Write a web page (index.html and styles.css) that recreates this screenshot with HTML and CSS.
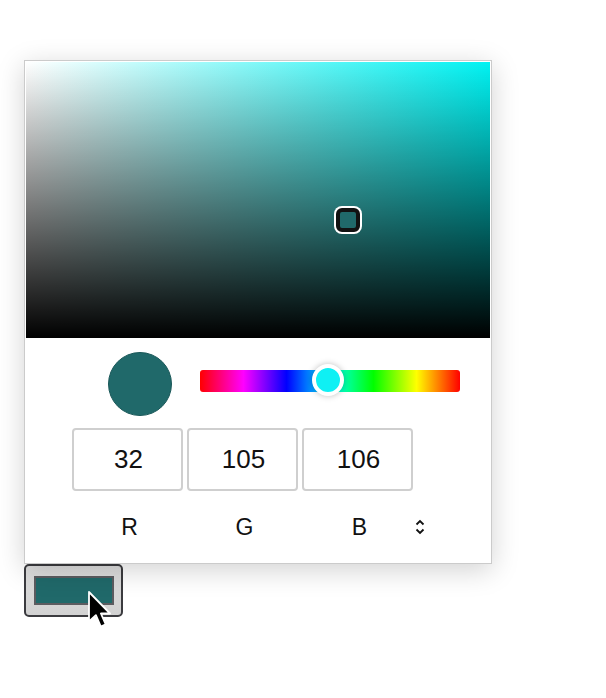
FILE: index.html
```html
<!DOCTYPE html>
<html>
<head>
<meta charset="utf-8">
<link rel="stylesheet" href="styles.css">
</head>
<body>
<div class="stage">
  <div class="popup">
    <div class="sv-area">
      <div class="sv-marker"></div>
    </div>
    <div class="controls">
      <div class="row-top">
        <div class="swatch-circle"></div>
        <div class="hue-bar">
          <div class="hue-thumb"></div>
        </div>
      </div>
      <div class="row-inputs">
        <div class="num-box">32</div>
        <div class="num-box">105</div>
        <div class="num-box">106</div>
      </div>
      <div class="row-labels">
        <span class="lbl">R</span>
        <span class="lbl">G</span>
        <span class="lbl">B</span>
        <svg class="chev" width="10" height="16" viewBox="0 0 10 16">
          <path d="M1.5 5.5 L5 2 L8.5 5.5" fill="none" stroke="#111" stroke-width="1.8"/>
          <path d="M1.5 10.5 L5 14 L8.5 10.5" fill="none" stroke="#111" stroke-width="1.8"/>
        </svg>
      </div>
    </div>
  </div>
  <div class="color-button">
    <div class="color-fill"></div>
  </div>
  <svg class="cursor" width="26" height="40" viewBox="0 0 26 40">
    <path d="M2 1 L2 30.5 L8.9 24.2 L13.8 35.5 L18.7 33.4 L13.9 22.5 L23 22.5 Z" fill="#000" stroke="#fff" stroke-width="1.8" stroke-linejoin="round"/>
  </svg>
</div>
</body>
</html>
```
FILE: styles.css
```css
html, body {
  margin: 0;
  padding: 0;
  background: #fff;
  font-family: "Liberation Sans", Arial, sans-serif;
}
.stage {
  position: relative;
  padding: 60px 0 0 24px;
  width: 606px;
  height: 698px;
  box-sizing: border-box;
}
.popup {
  width: 468px;
  height: 504px;
  box-sizing: border-box;
  border: 1px solid #cbcbcb;
  padding: 1px;
  background: #fff;
  box-shadow: 0 6px 26px rgba(0,0,0,0.18);
  position: relative;
  z-index: 2;
}
.sv-area {
  position: relative;
  width: 464px;
  height: 276px;
  background:
    linear-gradient(to top, #000 0%, rgba(0,0,0,0) 100%),
    linear-gradient(to right, #fff 0%, #00f2f2 100%);
}
.sv-marker {
  position: absolute;
  left: 310px;
  top: 146px;
  width: 24px;
  height: 24px;
  box-sizing: border-box;
  border: 4px solid #121212;
  border-radius: 6px;
  box-shadow: 0 0 0 2px #fff;
  background: #20696a;
}
.controls {
  display: flex;
  flex-direction: column;
}
.row-top {
  display: flex;
  align-items: center;
  margin-top: 14px;
  padding-left: 82px;
  gap: 28px;
}
.swatch-circle {
  width: 64px;
  height: 64px;
  border-radius: 50%;
  background: #20696a;
  box-sizing: border-box;
  border: 1px solid #1a5859;
}
.hue-bar {
  position: relative;
  width: 260px;
  height: 22px;
  margin-bottom: 6px;
  border-radius: 3px;
  background: linear-gradient(to right, #ff0000 0%, #ff00ff 16.7%, #0000ff 33.3%, #00ffff 50%, #00ff00 66.7%, #ffff00 83.3%, #ff0000 100%);
}
.hue-thumb {
  position: absolute;
  left: 112px;
  top: -6px;
  width: 32px;
  height: 32px;
  box-sizing: border-box;
  border-radius: 50%;
  border: 4px solid #fff;
  background: #0ff0f4;
  box-shadow: 0 0 6px rgba(0,0,0,0.25);
}
.row-inputs {
  display: flex;
  margin-top: 12px;
  padding-left: 46px;
  gap: 4px;
}
.num-box {
  width: 111px;
  height: 63px;
  box-sizing: border-box;
  border: 2px solid #cfcfcf;
  border-radius: 4px;
  display: flex;
  align-items: center;
  justify-content: center;
  font-size: 26px;
  color: #111;
  padding-left: 2px;
}
.row-labels {
  display: flex;
  align-items: center;
  margin-top: 21px;
  padding-left: 48px;
  gap: 4px;
  height: 30px;
}
.lbl {
  width: 111px;
  text-align: center;
  font-size: 23px;
  line-height: 30px;
  color: #111;
}
.chev {
  margin-left: -4px;
}
.color-button {
  width: 99px;
  height: 53px;
  box-sizing: border-box;
  border: 2px solid #3b3b3f;
  border-radius: 5px;
  background: linear-gradient(to bottom, #dedede, #d2d2d2);
  display: flex;
  align-items: center;
  justify-content: center;
  padding-bottom: 1px;
  position: relative;
  z-index: 1;
}
.color-fill {
  width: 80px;
  height: 29px;
  box-sizing: border-box;
  border: 2px solid #5c5c60;
  background: #20696a;
}
.cursor {
  position: absolute;
  left: 87px;
  top: 591px;
  z-index: 3;
}
```
